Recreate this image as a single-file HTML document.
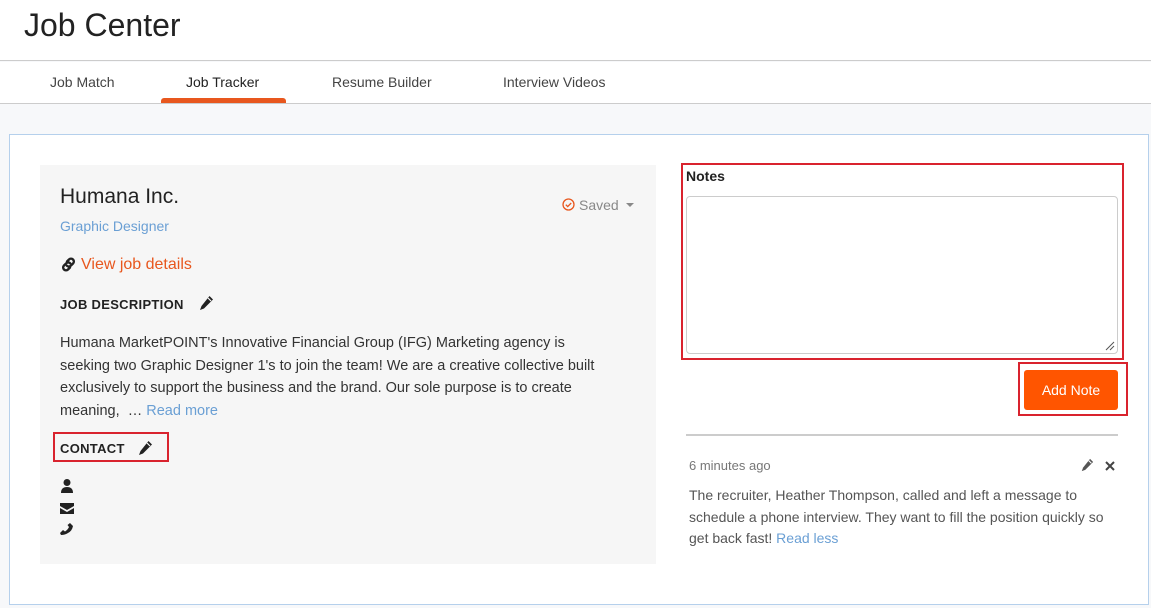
<!DOCTYPE html>
<html><head><style>
*{box-sizing:border-box;margin:0;padding:0}
body{width:1151px;height:608px;overflow:hidden;font-family:"Liberation Sans",sans-serif;background:#f7f8fa;position:relative;color:#222}
.a{position:absolute}
</style></head><body>
<div class="a" style="left:0;top:0;width:1151px;height:61px;background:#fff;border-bottom:1px solid #ccc"></div>
<div class="a" style="left:24px;top:7px;font-size:32px;color:#222">Job Center</div>
<div class="a" style="left:0;top:62px;width:1151px;height:42px;background:#fff;border-bottom:1px solid #ccc"></div>
<div class="a" style="left:50px;top:74px;font-size:14px;color:#444">Job Match</div>
<div class="a" style="left:186px;top:74px;font-size:14px;color:#222">Job Tracker</div>
<div class="a" style="left:161px;top:98px;width:125px;height:5px;background:#e8571e;border-radius:3px 3px 0 0"></div>
<div class="a" style="left:332px;top:74px;font-size:14px;color:#444">Resume Builder</div>
<div class="a" style="left:503px;top:74px;font-size:14px;color:#444">Interview Videos</div>

<div class="a" style="left:9px;top:134px;width:1140px;height:471px;background:#fff;border:1px solid #b5d0ec"></div>
<div class="a" style="left:40px;top:165px;width:616px;height:399px;background:#f6f6f6"></div>
<div class="a" style="left:60px;top:185px;font-size:21px;color:#222">Humana Inc.</div>
<div class="a" style="left:60px;top:218px;font-size:14px;color:#6a9fd4">Graphic Designer</div>
<svg class="a" style="left:562px;top:198px" width="13" height="13" viewBox="0 0 13 13"><circle cx="6.5" cy="6.5" r="5.5" fill="none" stroke="#e8571e" stroke-width="1.3"/><path d="M3.8 6.7l1.9 1.9 3.5-3.6" fill="none" stroke="#e8571e" stroke-width="1.3"/></svg>
<div class="a" style="left:579px;top:197px;font-size:14px;color:#888">Saved</div>
<svg class="a" style="left:626px;top:203px" width="8" height="5"><path d="M0 0h8L4 4z" fill="#888"/></svg>
<svg class="a" style="left:60px;top:256px" width="17" height="17" viewBox="0 0 17 17"><g fill="none" stroke="#222" stroke-width="2.4" stroke-linecap="round"><path d="M7 5.5l2-2a2.8 2.8 0 014 4l-2.2 2.2a2.8 2.8 0 01-4 0"/><path d="M10 11.5l-2 2a2.8 2.8 0 01-4-4l2.2-2.2a2.8 2.8 0 014 0"/></g></svg>
<div class="a" style="left:81px;top:256px;font-size:16px;color:#e8571e">View job details</div>
<div class="a" style="left:60px;top:297px;font-size:13px;font-weight:bold;letter-spacing:.3px">JOB DESCRIPTION</div>
<svg class="a" style="left:198px;top:295px" width="16" height="16" viewBox="0 0 16 16"><path d="M11.5 1l3.5 3.5-9 9-4 1.5 1.5-4z" fill="#222"/><path d="M10 3l3 3" stroke="#f6f6f6" stroke-width="1.2"/></svg>
<div class="a" style="left:60px;top:332px;width:548px;font-size:14.5px;line-height:22.5px;color:#333">Humana MarketPOINT's Innovative Financial Group (IFG) Marketing agency is seeking two Graphic Designer 1's to join the team! We are a creative collective built exclusively to support the business and the brand. Our sole purpose is to create meaning, &nbsp;… <span style="color:#6a9fd4">Read more</span></div>
<div class="a" style="left:53px;top:432px;width:116px;height:30px;border:2px solid #d9232e"></div>
<div class="a" style="left:60px;top:441px;font-size:13px;font-weight:bold;letter-spacing:.3px">CONTACT</div>
<svg class="a" style="left:137px;top:440px" width="16" height="16" viewBox="0 0 16 16"><path d="M11.5 1l3.5 3.5-9 9-4 1.5 1.5-4z" fill="#222"/><path d="M10 3l3 3" stroke="#f6f6f6" stroke-width="1.2"/></svg>
<svg class="a" style="left:60px;top:478px" width="16" height="62" viewBox="0 0 16 62" fill="#222">
<circle cx="7" cy="4.5" r="3.5"/><path d="M1 15 Q1 9 7 9 Q13 9 13 15Z"/>
<path d="M0 25h14v3l-7 4-7-4z M0 30l7 4 7-4v6H0z"/>
<path d="M10 45 l3 3 q-1 5 -5 7 q-3 2 -7 2 l-1 -2 l3 -3 l2 1.5 q3 -2 4 -4.5 l-1.5 -2z"/>
</svg>

<div class="a" style="left:681px;top:163px;width:443px;height:197px;border:2px solid #d9232e"></div>
<div class="a" style="left:686px;top:168px;font-size:14px;font-weight:bold">Notes</div>
<div class="a" style="left:686px;top:196px;width:432px;height:158px;background:#fff;border:1px solid #ccc;border-radius:4px"></div>
<svg class="a" style="left:1105px;top:341px" width="10" height="10"><path d="M1 9L9 1M5 9L9 5" stroke="#555" stroke-width="1"/></svg>
<div class="a" style="left:1018px;top:362px;width:110px;height:54px;border:2px solid #d9232e"></div>
<div class="a" style="left:1024px;top:370px;width:94px;height:40px;background:#ff5500;border-radius:3px;color:#fff;font-size:14px;text-align:center;line-height:40px">Add Note</div>
<div class="a" style="left:686px;top:434px;width:432px;height:2px;background:#ccc"></div>
<div class="a" style="left:689px;top:458px;font-size:13px;color:#777">6 minutes ago</div>
<svg class="a" style="left:1080px;top:458px" width="14" height="14" viewBox="0 0 16 16"><path d="M11.5 1l3.5 3.5-9 9-4 1.5 1.5-4z" fill="#555"/><path d="M10 3l3 3" stroke="#fff" stroke-width="1.2"/></svg>
<svg class="a" style="left:1105px;top:461px" width="10" height="10"><path d="M1 1L9 9M9 1L1 9" stroke="#444" stroke-width="2"/></svg>
<div class="a" style="left:689px;top:485px;width:425px;font-size:14px;line-height:21.5px;color:#555">The recruiter, Heather Thompson, called and left a message to schedule a phone interview. They want to fill the position quickly so get back fast! <span style="color:#6a9fd4">Read less</span></div>
</body></html>
